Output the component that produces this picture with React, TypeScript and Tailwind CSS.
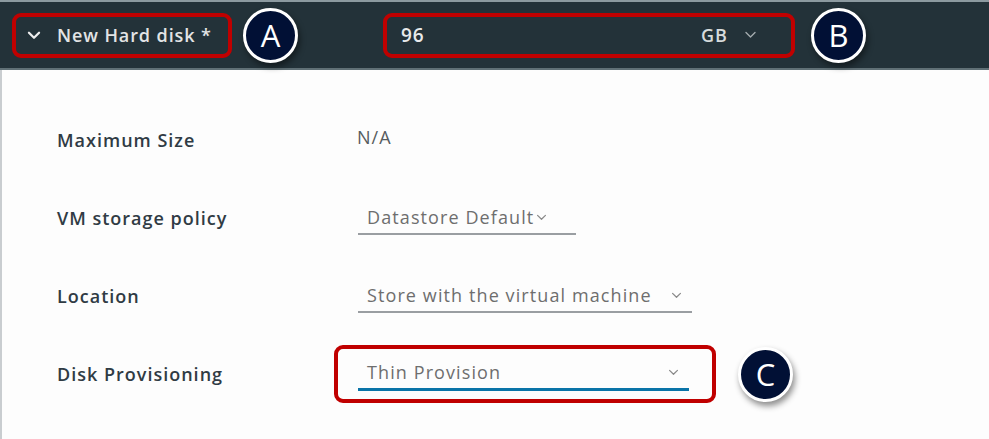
import React from 'react'

const font = { fontFamily: '"Open Sans", "Liberation Sans", sans-serif' }

function Chevron({ className, stroke = 1.4 }: { className?: string; stroke?: number }) {
  return (
    <svg viewBox="0 0 12 8" className={className} fill="none" stroke="currentColor" strokeWidth={stroke} strokeLinecap="round" strokeLinejoin="round">
      <path d="M1.5 1.5 L6 6 L10.5 1.5" />
    </svg>
  )
}

function Badge({ letter, className = '' }: { letter: string; className?: string }) {
  return (
    <div
      className={`flex h-[55px] w-[55px] shrink-0 items-center justify-center rounded-full border-[3px] border-white bg-[#011035] text-[31px] leading-none text-white shadow-[2px_4px_6px_rgba(0,0,0,0.45)] ${className}`}
    >
      {letter}
    </div>
  )
}

function Select({ text, width, chevronGap, active }: { text: string; width: string; chevronGap?: boolean; active?: boolean }) {
  return (
    <div className={`flex items-center ${width} h-[34px] pl-[9px] pr-[10px] ${active ? 'border-b-[3px] border-[#0a74a8]' : 'border-b-2 border-[#9a9ea2]'}`}>
      <span className="whitespace-nowrap text-[18px] tracking-[1.1px] text-[#6e6e6e]">{text}</span>
      {chevronGap ? <span className="flex-1" /> : null}
      <Chevron className={`h-[7px] w-[11px] text-[#8a8a8a] ${chevronGap ? '' : 'ml-[2px]'}`} />
    </div>
  )
}

function Label({ children }: { children: React.ReactNode }) {
  return <div className="w-[332px] pl-[55px] text-[18px] font-semibold tracking-[1px] text-[#303b44]">{children}</div>
}

export default function App() {
  return (
    <div style={font} className="flex h-[439px] w-[989px] flex-col overflow-hidden bg-[#fdfdfd]">
      {/* header */}
      <div className="flex h-[70px] shrink-0 items-center border-t-2 border-b-2 border-t-[#8c9aa0] border-b-[#607076] bg-[#233239]">
        <div className="ml-[12px] flex h-[45px] w-[220px] items-center rounded-[9px] border-4 border-[#c00000] pl-[11px]">
          <Chevron className="h-[9px] w-[14px] text-[#eeeeee]" stroke={2} />
          <span className="ml-[16px] text-[18px] font-semibold tracking-[0.9px] text-[#e2e4e5]">New Hard disk *</span>
        </div>
        <Badge letter="A" className="ml-[11px]" />
        <div className="ml-[85px] flex h-[45px] w-[412px] items-center rounded-[9px] border-4 border-[#c00000] pl-[14px] pr-[34px]">
          <span className="text-[19px] font-semibold tracking-[1px] text-[#e8eaeb]">96</span>
          <span className="flex-1" />
          <span className="text-[18px] font-semibold tracking-[1px] text-[#d8dbdc]">GB</span>
          <Chevron className="ml-[16px] h-[8px] w-[13px] text-[#a3abae]" />
        </div>
        <Badge letter="B" className="ml-[16px]" />
      </div>

      {/* body */}
      <div className="flex-1 border-l-2 border-[#c9cdd0] pt-[31px]">
        <div className="flex h-[78px] items-center">
          <Label>Maximum Size</Label>
          <div className="-mt-[6px] pl-[23px] text-[18px] tracking-[1px] text-[#565b60]">N/A</div>
        </div>
        <div className="flex h-[78px] items-center">
          <Label>VM storage policy</Label>
          <div className="pl-[24px]">
            <Select text="Datastore Default" width="w-[218px]" />
          </div>
        </div>
        <div className="flex h-[78px] items-center">
          <Label>Location</Label>
          <div className="pl-[24px]">
            <Select text="Store with the virtual machine" width="w-[334px]" chevronGap />
          </div>
        </div>
        <div className="flex h-[78px] items-center">
          <Label>Disk Provisioning</Label>
          <div className="flex h-[58px] w-[382px] items-center rounded-[9px] border-4 border-[#c00000] pl-[20px] pr-[23px]">
            <Select text="Thin Provision" width="w-[331px]" chevronGap active />
          </div>
          <Badge letter="C" className="ml-[22px]" />
        </div>
      </div>
    </div>
  )
}
